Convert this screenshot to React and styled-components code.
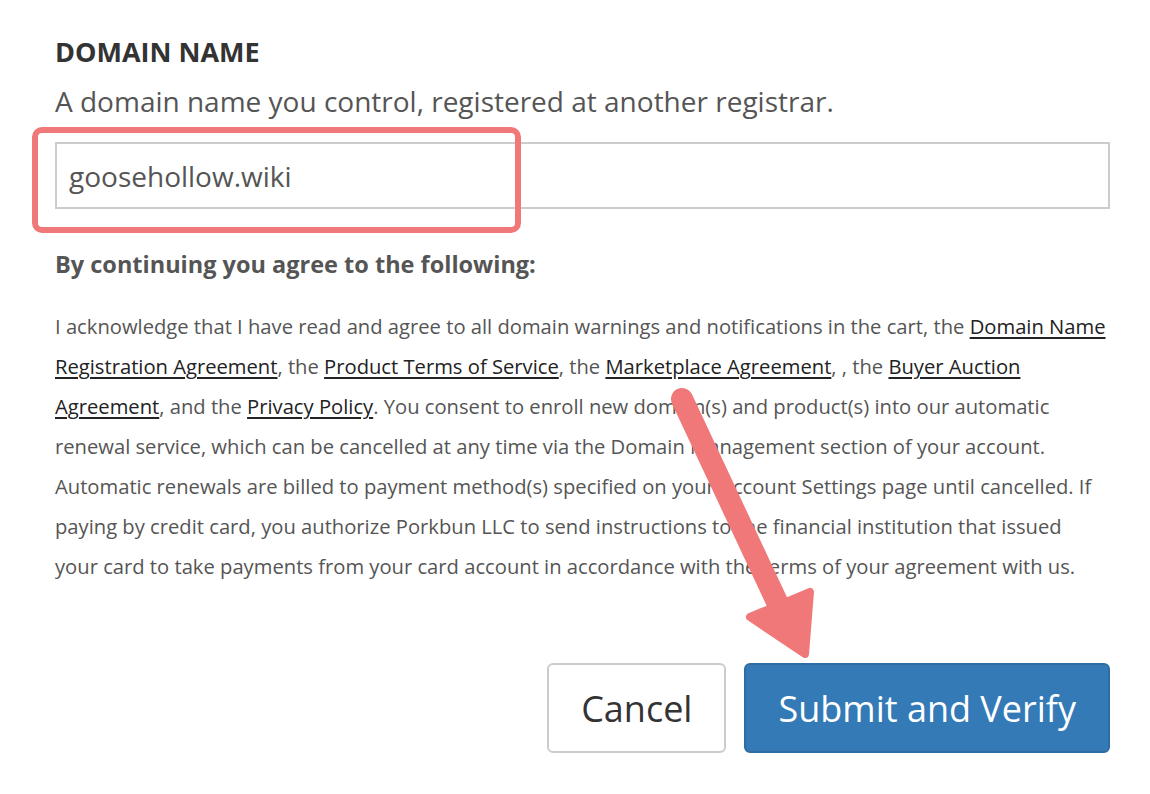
import React from "react";
import styled, { createGlobalStyle } from "styled-components";

const GlobalStyle = createGlobalStyle`
  html, body {
    margin: 0;
    padding: 0;
    background: #ffffff;
  }
  body {
    font-family: "Open Sans", "Noto Sans", "Liberation Sans", sans-serif;
    -webkit-font-smoothing: antialiased;
  }
  * { box-sizing: border-box; }
`;

const ANNOT = "#f07878";

const Page = styled.div`
  position: relative;
  width: 1150px;
  min-height: 794px;
  padding: 36px 40px 0 55px;
`;

const Label = styled.div`
  margin: 0;
  font-size: 27px;
  line-height: 32px;
  font-weight: 700;
  color: #333333;
`;

const Help = styled.p`
  margin: 15px 0 0;
  font-size: 28px;
  line-height: 36px;
  color: #555555;
`;

const FieldWrap = styled.div`
  position: relative;
  margin-top: 23px;
`;

const Input = styled.input`
  display: block;
  width: 100%;
  height: 67px;
  border: 2px solid #cccccc;
  border-radius: 0;
  padding: 0 12px;
  font-family: inherit;
  font-size: 28px;
  color: #555555;
  background: #ffffff;
  outline: none;
`;

const Highlight = styled.div`
  position: absolute;
  left: -23px;
  top: -15px;
  width: 489px;
  height: 106px;
  border: 6px solid ${ANNOT};
  border-radius: 10px;
  pointer-events: none;
`;

const AgreeTitle = styled.div`
  margin-top: 41px;
  font-size: 23.5px;
  line-height: 28px;
  font-weight: 700;
  color: #555555;
`;

const Terms = styled.p`
  margin: 28px 0 0;
  padding-right: 4px;
  font-size: 20.2px;
  line-height: 40px;
  color: #555555;
`;

const TermLink = styled.a`
  color: #222222;
  text-decoration: underline;
  text-underline-offset: 3px;
  text-decoration-thickness: 1.5px;
`;

const Actions = styled.div`
  display: flex;
  justify-content: flex-end;
  gap: 18px;
  margin-top: 77px;
`;

const Button = styled.button`
  height: 90px;
  padding: 0 32px;
  font-family: inherit;
  font-size: 36px;
  border-radius: 6px;
  border: 2px solid ${(p) => (p.$primary ? "#2e6da4" : "#cccccc")};
  background: ${(p) => (p.$primary ? "#337ab7" : "#ffffff")};
  color: ${(p) => (p.$primary ? "#ffffff" : "#333333")};
  cursor: pointer;
`;

const ArrowLayer = styled.svg`
  position: absolute;
  left: 0;
  top: 0;
  width: 1150px;
  height: 794px;
  pointer-events: none;
`;

function Arrow() {
  return (
    <ArrowLayer viewBox="0 0 1150 794">
      <line
        x1="682"
        y1="399"
        x2="778"
        y2="604"
        stroke={ANNOT}
        strokeWidth="22"
        strokeLinecap="round"
      />
      <polygon
        points="750,617 810,592 805,654"
        fill={ANNOT}
        stroke={ANNOT}
        strokeWidth="8"
        strokeLinejoin="round"
      />
    </ArrowLayer>
  );
}

export default function App() {
  return (
    <>
      <GlobalStyle />
      <Page>
        <Label>DOMAIN NAME</Label>
        <Help>A domain name you control, registered at another registrar.</Help>
        <FieldWrap>
          <Input defaultValue="goosehollow.wiki" readOnly />
          <Highlight />
        </FieldWrap>
        <AgreeTitle>By continuing you agree to the following:</AgreeTitle>
        <Terms>
          I acknowledge that I have read and agree to all domain warnings and notifications in the cart, the{" "}
          <TermLink href="#">Domain Name Registration Agreement</TermLink>, the{" "}
          <TermLink href="#">Product Terms of Service</TermLink>, the{" "}
          <TermLink href="#">Marketplace Agreement</TermLink>, , the{" "}
          <TermLink href="#">Buyer Auction Agreement</TermLink>, and the{" "}
          <TermLink href="#">Privacy Policy</TermLink>. You consent to enroll new domain(s) and product(s) into our
          automatic renewal service, which can be cancelled at any time via the Domain Management section of your
          account. Automatic renewals are billed to payment method(s) specified on your Account Settings page until
          cancelled. If paying by credit card, you authorize Porkbun LLC to send instructions to the financial
          institution that issued your card to take payments from your card account in accordance with the terms of
          your agreement with us.
        </Terms>
        <Actions>
          <Button type="button">Cancel</Button>
          <Button type="button" $primary>
            Submit and Verify
          </Button>
        </Actions>
        <Arrow />
      </Page>
    </>
  );
}
